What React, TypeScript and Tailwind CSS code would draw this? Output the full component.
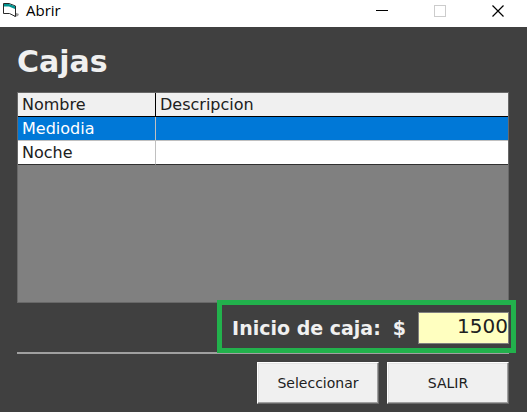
import { useState } from "react";

const CAJAS = [
  { nombre: "Mediodia", descripcion: "" },
  { nombre: "Noche", descripcion: "" },
];

function FormIcon() {
  return (
    <svg width="18" height="16" viewBox="0 0 18 16" aria-hidden="true">
      <path d="M12 10l5 2-1 2-4 1z" fill="#9a9a9a" />
      <path d="M1.5 1.5H7l6.5 2.5v10.5l-6-3h-6z" fill="#ffffff" stroke="#2a2a2a" />
      <path d="M2 2h5l6 2.3V7L7 4.500H2z" fill="#009490" />
    </svg>
  );
}

function TitleBar() {
  return (
    <header className="flex h-[27px] items-start justify-between bg-white">
      <div className="flex items-center gap-1.5 pt-0.5 pl-0.5">
        <FormIcon />
        <h1 className="font-[family-name:'Open_Sans',sans-serif] text-[15px] leading-4 text-black">Abrir</h1>
      </div>
      <div className="flex h-[22px]">
        <button type="button" aria-label="Minimizar" className="flex w-[58px] items-center justify-center">
          <svg width="12" height="12" viewBox="0 0 12 12" shapeRendering="crispEdges">
            <path d="M0 5h12v1H0z" fill="#000" />
          </svg>
        </button>
        <button type="button" aria-label="Maximizar" disabled className="flex w-[58px] items-center justify-center">
          <svg width="12" height="12" viewBox="0 0 12 12" shapeRendering="crispEdges">
            <path d="M.5.5h11v11H.5z" fill="none" stroke="#ccc" />
          </svg>
        </button>
        <button type="button" aria-label="Cerrar" className="flex w-[58px] items-center justify-center">
          <svg width="12" height="12" viewBox="0 0 12 12">
            <path d="M.5.5l11 11M11.5.5l-11 11" stroke="#000" strokeWidth="1.2" />
          </svg>
        </button>
      </div>
    </header>
  );
}

export default function App() {
  const [selected, setSelected] = useState("Mediodia");
  const [monto, setMonto] = useState("1500");

  return (
    <div className="min-h-screen bg-[#404040] font-[family-name:'DejaVu_Sans',sans-serif]">
      <TitleBar />
      <main className="pr-[18px] pb-2 pl-[17px]">
        <h2 className="pt-[18px] pb-3.5 text-[30px] leading-[33px] font-bold text-[#f0f0f0]">Cajas</h2>

        <div className="h-[211px] border border-[#686868] bg-[#808080]">
          <table className="w-full table-fixed border-separate border-spacing-0 text-left text-[16px] leading-[23px]">
            <thead>
              <tr className="bg-[#f0f0f0] text-[#202020]">
                <th className="h-6 w-[138px] border-r border-b border-black px-1 py-0 font-normal">Nombre</th>
                <th className="h-6 border-b border-black px-1 py-0 font-normal">Descripcion</th>
              </tr>
            </thead>
            <tbody>
              {CAJAS.map((c) => (
                <tr
                  key={c.nombre}
                  onClick={() => setSelected(c.nombre)}
                  className={
                    c.nombre === selected
                      ? "border-[#c0c0c0] bg-[#0078d7] text-white"
                      : "border-[#303030] bg-white text-[#202020]"
                  }
                >
                  <td className="h-6 border-r border-b border-r-[#c0c0c0] border-b-inherit px-1 py-0">{c.nombre}</td>
                  <td className="h-6 border-b border-b-inherit px-1 py-0">{c.descripcion}</td>
                </tr>
              ))}
            </tbody>
          </table>
        </div>

        <div className="relative flex h-[51px] items-center justify-end border-b-2 border-[#a0a0a0]">
          <div className="pointer-events-none absolute -top-[3px] -right-[7px] -bottom-px w-[299px] border-[5px] border-[#22b14c]" />
          <label htmlFor="monto" className="flex gap-3 pr-3 text-[19px] leading-6 font-bold text-[#f0f0f0]">
            <span>Inicio de caja:</span>
            <span>$</span>
          </label>
          <input
            id="monto"
            type="text"
            value={monto}
            onChange={(e) => setMonto(e.target.value)}
            className="h-8 w-[91px] border border-[#808080] bg-[#ffffc0] pb-1 text-right text-[20px] text-[#202020] outline-none"
          />
        </div>

        <div className="flex justify-end gap-2 pt-2">
          {["Seleccionar", "SALIR"].map((label) => (
            <button
              key={label}
              type="button"
              className="h-[42px] w-[122px] border border-t-white border-l-white border-r-[#696969] border-b-[#696969] bg-[#f0f0f0] text-[14px] text-[#202020] shadow-[inset_-1px_-1px_0_#a0a0a0,inset_1px_1px_0_#e3e3e3]"
            >
              {label}
            </button>
          ))}
        </div>
      </main>
    </div>
  );
}
